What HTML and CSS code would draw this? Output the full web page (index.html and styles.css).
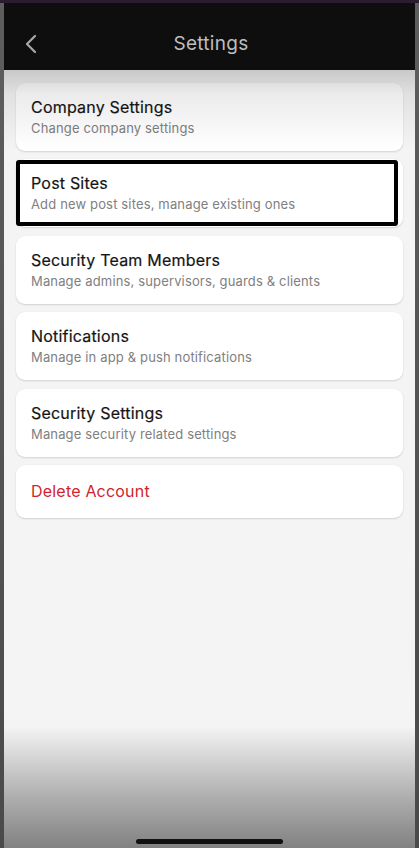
FILE: index.html
```html
<!DOCTYPE html>
<html>
<head>
<meta charset="utf-8">
<link rel="stylesheet" href="styles.css">
</head>
<body>
<div class="topline"></div>
<div class="frame">
  <div class="screen">
    <header class="header">
      <button class="back" aria-label="Back">
        <svg width="12" height="20" viewBox="0 0 12 20"><path d="M10 2 L2 10 L10 18" fill="none" stroke="#a9a9a9" stroke-width="2.2" stroke-linecap="round" stroke-linejoin="round"/></svg>
      </button>
      <h1 class="title">Settings</h1>
      <span class="spacer"></span>
    </header>
    <main class="list">
      <div class="card">
        <div class="card-title">Company Settings</div>
        <div class="card-sub">Change company settings</div>
      </div>
      <div class="card highlighted">
        <div class="card-title">Post Sites</div>
        <div class="card-sub">Add new post sites, manage existing ones</div>
        <span class="focus-box"></span>
      </div>
      <div class="card">
        <div class="card-title">Security Team Members</div>
        <div class="card-sub">Manage admins, supervisors, guards &amp; clients</div>
      </div>
      <div class="card">
        <div class="card-title">Notifications</div>
        <div class="card-sub">Manage in app &amp; push notifications</div>
      </div>
      <div class="card">
        <div class="card-title">Security Settings</div>
        <div class="card-sub">Manage security related settings</div>
      </div>
      <div class="card danger">
        <div class="card-title">Delete Account</div>
      </div>
    </main>
    <div class="home-indicator"></div>
  </div>
</div>
</body>
</html>
```
FILE: styles.css
```css
* { box-sizing: border-box; }
html, body { margin: 0; padding: 0; }
body {
  width: 419px;
  height: 848px;
  overflow: hidden;
  background: linear-gradient(#5e5e5e, #4a4a4a);
  font-family: "Inter", "Noto Sans", sans-serif;
}
.topline {
  height: 3px;
  background: #2b1c2f;
}
.frame {
  padding: 0 4px;
  height: 845px;
}
.screen {
  position: relative;
  height: 845px;
  background: #f4f4f4;
  display: flex;
  flex-direction: column;
  overflow: hidden;
}
.screen::before {
  content: "";
  position: absolute;
  left: 0; right: 0; top: 67px;
  height: 80px;
  background: linear-gradient(rgba(0,0,0,0.18), rgba(0,0,0,0.08) 30%, rgba(0,0,0,0));
  pointer-events: none;
  z-index: 2;
}
.screen::after {
  content: "";
  position: absolute;
  left: 0; right: 0; bottom: 0;
  height: 122px;
  background: linear-gradient(rgba(0,0,0,0), rgba(0,0,0,0.12) 25%, rgba(0,0,0,0.27) 55%, rgba(0,0,0,0.47));
  pointer-events: none;
  z-index: 2;
}
.header {
  height: 67px;
  flex: none;
  background: #0e0e0e;
  display: flex;
  align-items: center;
  padding: 14px 18px 0 21px;
  position: relative;
  z-index: 3;
}
.back {
  width: 20px;
  height: 30px;
  padding: 0;
  border: 0;
  background: none;
  display: flex;
  align-items: center;
  justify-content: flex-start;
}
.title {
  flex: 1;
  margin: 0;
  text-align: center;
  color: #bdbdbd;
  font-size: 19px;
  font-weight: 400;
  letter-spacing: 0.3px;
}
.spacer { width: 20px; }
.list {
  padding: 13px 12px 0;
  display: flex;
  flex-direction: column;
  gap: 8.4px;
}
.card {
  position: relative;
  height: 68px;
  background: #ffffff;
  border-radius: 9px;
  box-shadow: 0 1px 2px rgba(0,0,0,0.14), 0 0 1px rgba(0,0,0,0.06);
  padding: 13px 15px 0;
}
.card-title {
  font-size: 16px;
  font-weight: 400;
  color: #151515;
  line-height: 22px;
  letter-spacing: 0.2px;
  -webkit-text-stroke: 0.2px #151515;
}
.card-sub {
  margin-top: 1px;
  font-size: 13px;
  color: #808080;
  line-height: 18px;
  letter-spacing: 0.15px;
}
.focus-box {
  position: absolute;
  left: 0; top: 1px; right: 5px; bottom: 1px;
  border: 4px solid #000;
  border-radius: 3px;
}
.danger {
  height: 53px;
  padding-top: 15px;
}
.danger .card-title {
  color: #d1242c;
  -webkit-text-stroke: 0;
}
.home-indicator {
  position: absolute;
  left: 132px;
  bottom: 4px;
  width: 147px;
  height: 5px;
  border-radius: 3px;
  background: #111;
  z-index: 3;
}
```
